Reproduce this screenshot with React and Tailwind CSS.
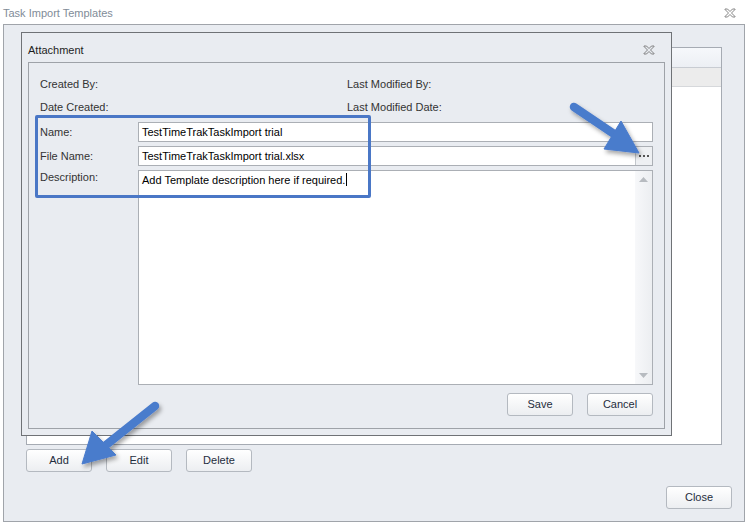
import React from "react";

function XIcon({ className = "" }) {
  return (
    <svg className={className} width="12" height="10" viewBox="0 0 12 10">
      <path
        d="M1 1 L3.5 1 L6 3.5 L8.5 1 L11 1 L11 1.5 L7.5 5 L11 8.5 L11 9 L8.5 9 L6 6.5 L3.5 9 L1 9 L1 8.5 L4.5 5 L1 1.5 Z"
        fill="none"
        stroke="#666"
        strokeWidth="0.8"
        strokeLinejoin="round"
      />
    </svg>
  );
}

function Btn({ children }) {
  return (
    <div className="flex h-[23px] w-[66px] items-center justify-center rounded-[3px] border border-[#b4b9c0] bg-gradient-to-b from-white to-[#eceef1] text-[11px] text-[#1f2d3d]">
      {children}
    </div>
  );
}

function TriUp() {
  return (
    <svg width="9" height="5" viewBox="0 0 9 5">
      <path d="M0 5 L4.5 0 L9 5 Z" fill="#b7bbc0" />
    </svg>
  );
}
function TriDown() {
  return (
    <svg width="9" height="5" viewBox="0 0 9 5">
      <path d="M0 0 L4.5 5 L9 0 Z" fill="#b7bbc0" />
    </svg>
  );
}

export default function App() {
  return (
    <div className="relative h-[523px] w-[746px] overflow-hidden bg-white font-['Liberation_Sans',Arial,sans-serif] text-[11px]">
      {/* title bar */}
      <div className="flex h-[24px] items-center justify-between pl-[3px] pr-[10px] pt-[2px]">
        <span className="text-[11px] text-[#7f8c98]">Task Import Templates</span>
        <XIcon />
      </div>

      {/* outer window */}
      <div className="ml-[3px] flex h-[498px] w-[742px] flex-col border border-[#a0a4aa] bg-[#e9ecf1] pl-[22px] pt-[22px]">
        {/* grid */}
        <div className="flex h-[398px] w-[696px] flex-col border border-[#a6abb3] bg-white">
          <div className="h-[20px] border-b border-[#c8ccd2] bg-gradient-to-b from-[#f6f8fb] to-[#eceff4]" />
          <div className="h-[19px] border-b border-[#d6d8db] bg-[#ececec]" />
        </div>
        {/* buttons */}
        <div className="mt-[4px] flex gap-[14px]">
          <Btn>Add</Btn>
          <Btn>Edit</Btn>
          <Btn>Delete</Btn>
        </div>
        <div className="mb-[12px] mr-[12px] mt-auto self-end">
          <Btn>Close</Btn>
        </div>
      </div>

      {/* Attachment dialog */}
      <div className="absolute left-[21px] top-[32px] flex h-[404px] w-[651px] flex-col border border-[#6f7276] bg-[#e9ecf1] px-[6px] pb-[6px]">
        <div className="flex h-[29px] items-center justify-between pr-[10px] pt-[5px]">
          <span className="text-[11px] text-[#1e1e1e]">Attachment</span>
          <XIcon />
        </div>
        <div className="flex flex-1 flex-col border border-[#9ea2a8] pl-[11px] pr-[11px] pt-[12px]">
          <div className="grid h-[18px] grid-cols-[307px_1fr] items-center text-[#333]">
            <span>Created By:</span>
            <span>Last Modified By:</span>
          </div>
          <div className="mt-[5px] grid h-[18px] grid-cols-[307px_1fr] items-center text-[#333]">
            <span>Date Created:</span>
            <span>Last Modified Date:</span>
          </div>
          <div className="mt-[6px] flex h-[20px]">
            <span className="flex w-[98px] items-center text-[#333]">Name:</span>
            <div className="flex flex-1 items-center border border-[#abafb5] bg-white pl-[3px] text-black">
              TestTimeTrakTaskImport trial
            </div>
          </div>
          <div className="mt-[4px] flex h-[20px]">
            <span className="flex w-[98px] items-center text-[#333]">File Name:</span>
            <div className="flex flex-1 border border-[#abafb5] bg-white text-black">
              <span className="flex flex-1 items-center pl-[3px]">TestTimeTrakTaskImport trial.xlsx</span>
              <div className="flex w-[17px] items-center justify-center gap-[2px] border-l border-[#c3c7cc] bg-[#eef0f3]">
                <span className="h-[2px] w-[2px] bg-[#555]" />
                <span className="h-[2px] w-[2px] bg-[#555]" />
                <span className="h-[2px] w-[2px] bg-[#555]" />
              </div>
            </div>
          </div>
          <div className="mt-[4px] flex h-[215px]">
            <span className="w-[98px] leading-[14px] text-[#333]">Description:</span>
            <div className="flex flex-1 border border-[#abafb5] bg-white text-black">
              <div className="flex-1 pl-[3px] leading-[14px]">
                Add Template description here if required.
                <span className="ml-[1px] inline-block h-[13px] w-[1px] translate-y-[2px] bg-black" />
              </div>
              <div className="flex w-[17px] flex-col items-center justify-between bg-gradient-to-r from-[#f7f8fa] to-[#eceef1] py-[6px]">
                <TriUp />
                <TriDown />
              </div>
            </div>
          </div>
          <div className="mt-[8px] flex justify-end gap-[14px]">
            <Btn>Save</Btn>
            <Btn>Cancel</Btn>
          </div>
        </div>
      </div>

      {/* highlight box */}
      <div className="pointer-events-none absolute left-[35px] top-[115px] h-[83px] w-[336px] rounded-[2px] border-[3px] border-[#4a77c6]" />

      {/* arrows */}
      <svg className="pointer-events-none absolute left-0 top-0" width="746" height="523" viewBox="0 0 746 523">
        <defs>
          <filter id="sh" x="-20%" y="-20%" width="140%" height="140%">
            <feDropShadow dx="2" dy="3" stdDeviation="2" floodColor="#000" floodOpacity="0.35" />
          </filter>
        </defs>
        <g filter="url(#sh)" fill="#4a7bcc" stroke="#4a7bcc">
          <line x1="574" y1="107" x2="617" y2="136" strokeWidth="8.5" strokeLinecap="round" />
          <polygon points="604,149 621,121 639,153" strokeWidth="1" strokeLinejoin="round" />
          <line x1="155" y1="406" x2="106" y2="445" strokeWidth="8.5" strokeLinecap="round" />
          <polygon points="92,431 116,455 82,464" strokeWidth="1" strokeLinejoin="round" />
        </g>
      </svg>
    </div>
  );
}
